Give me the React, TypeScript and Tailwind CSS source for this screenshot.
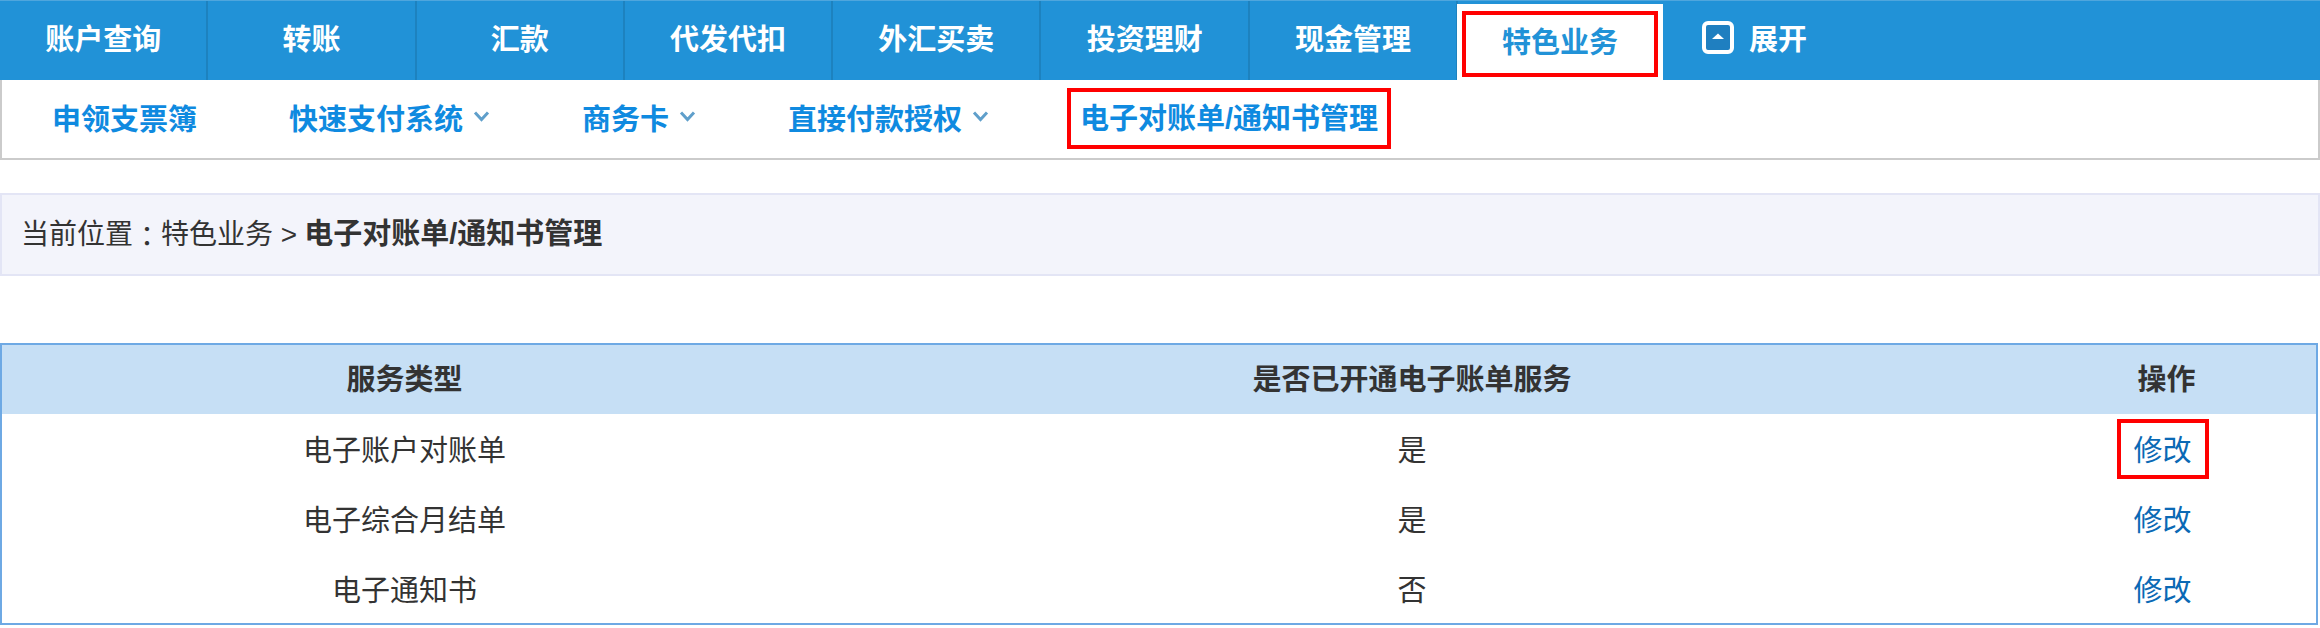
import React from "react";

const font = { fontFamily: '"Liberation Sans", "Noto Sans CJK SC", sans-serif' };

const tabs = ["账户查询", "转账", "汇款", "代发代扣", "外汇买卖", "投资理财", "现金管理"];

const rows = [
  { name: "电子账户对账单", open: "是", boxed: true },
  { name: "电子综合月结单", open: "是", boxed: false },
  { name: "电子通知书", open: "否", boxed: false },
];

function Chevron() {
  return (
    <svg width="17" height="11" viewBox="0 0 17 11" className="ml-[10px] mt-[-8px]">
      <path d="M2 1.5 L8.5 8.5 L15 1.5" fill="none" stroke="#5f9fcb" strokeWidth="3" />
    </svg>
  );
}

function SubItem({ label, arrow }: { label: string; arrow?: boolean }) {
  return (
    <div className="flex items-center px-[46px] pt-[3px] font-bold text-[#0f8ae0]">
      <span>{label}</span>
      {arrow && <Chevron />}
    </div>
  );
}

export default function App() {
  return (
    <div style={font} className="w-[2320px] h-[628px] bg-white overflow-hidden text-[29px] text-[#333]">
      <div className="flex h-20 bg-[#2192d7] border-t border-[#4fa6dd]">
        {tabs.map((tab) => (
          <div
            key={tab}
            className="w-[208.3px] flex items-center justify-center border-r-2 border-[#1d82bf] font-bold text-white"
          >
            {tab}
          </div>
        ))}
        <div className="w-[206px] mt-[3px] bg-white flex items-center justify-center px-[5px] pt-[4px] ml-[-1px]">
          <div className="w-full h-[66px] border-[4px] border-[#ff0000] flex items-center justify-center font-bold text-[#2192d7]">
            特色业务
          </div>
        </div>
        <div className="flex items-center ml-[39px] font-bold text-white">
          <svg width="32" height="33" viewBox="0 0 32 33" className="mb-[6px]">
            <rect x="2" y="2" width="28" height="29" rx="4" fill="#1f7fc0" stroke="#fff" strokeWidth="4" />
            <path d="M10 18 L16 12.5 L22 18 Z" fill="#fff" />
          </svg>
          <span className="ml-[15px]">展开</span>
        </div>
      </div>

      <div className="flex h-20 border-l-2 border-r-2 border-b-2 border-[#cbcbcb] pl-1 items-center">
        <SubItem label="申领支票簿" />
        <SubItem label="快速支付系统" arrow />
        <SubItem label="商务卡" arrow />
        <SubItem label="直接付款授权" arrow />
        <div className="ml-[32px] h-[61px] px-[9px] mt-[-2px] pt-[3px] border-[4px] border-[#ff0000] flex items-center font-bold text-[#0f8ae0]">
          电子对账单/通知书管理
        </div>
      </div>

      <div className="mt-[33px] h-[83px] bg-[#f3f4fb] border-2 border-[#e3e5f5] flex items-center pl-[19px]">
        <span className="text-[28px]">当前位置</span>
        <span className="text-[28px] font-['Noto_Sans_CJK_TC']">：</span>
        <span className="text-[28px]">特色业务 &gt;</span>
        <span className="font-bold ml-[7px]">电子对账单/通知书管理</span>
      </div>

      <table className="mt-[67px] w-[2318px] h-[282px] table-fixed border-collapse border-2 border-[#6ea9e4] text-center">
        <thead>
          <tr className="bg-[#c6dff5] h-[70px] font-bold">
            <th className="w-[806px] pt-[3px]">服务类型</th>
            <th className="pt-[3px]">是否已开通电子账单服务</th>
            <th className="w-[300px] pt-[3px]">操作</th>
          </tr>
        </thead>
        <tbody>
          {rows.map((row) => (
            <tr key={row.name} className="h-[70px]">
              <td className="pt-[6px]">{row.name}</td>
              <td className="pt-[6px]">{row.open}</td>
              <td className={row.boxed ? "pr-2" : "pr-2 pt-[6px]"}>
                <a
                  className={
                    row.boxed
                      ? "inline-block w-[92px] h-[60px] leading-[56px] border-[4px] border-[#ff0000] text-[#0a69b5]"
                      : "text-[#0a69b5]"
                  }
                >
                  修改
                </a>
              </td>
            </tr>
          ))}
        </tbody>
      </table>
    </div>
  );
}
